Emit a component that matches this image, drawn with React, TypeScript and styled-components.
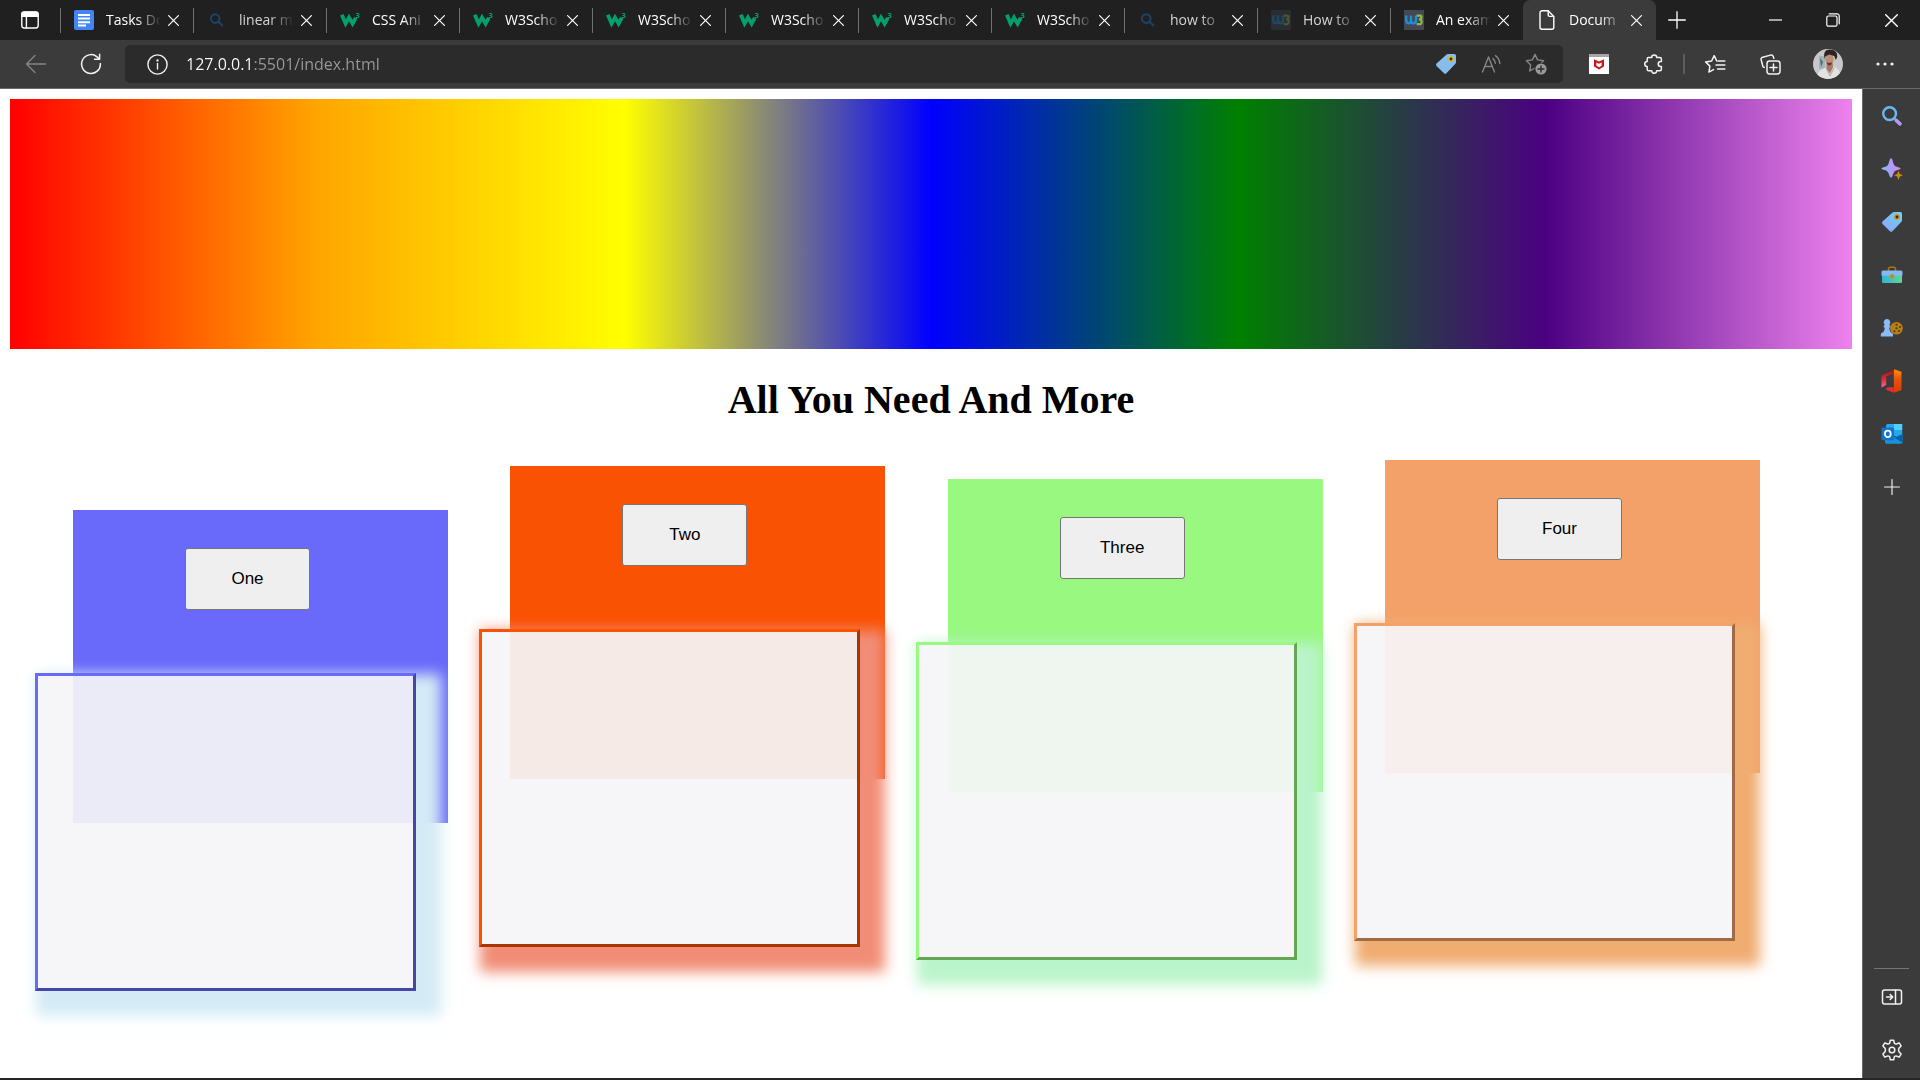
import React from "react";
import styled, { createGlobalStyle } from "styled-components";

const GlobalStyle = createGlobalStyle`
  * { box-sizing: border-box; }
  body { margin: 0; background: #fff; }
  button { font: inherit; }
`;

const uiFont = `"Segoe UI", "Open Sans", "Noto Sans", sans-serif`;

const Window = styled.div`
  display: flex;
  flex-direction: column;
  min-height: 100vh;
  background: #3b3b3b;
  border-bottom: 2px solid #262626;
  font-family: ${uiFont};
`;

/* ---------- tab strip ---------- */

const TabStrip = styled.div`
  display: flex;
  height: 40px;
  background: #202020;
  color: #fff;
`;

const StripButton = styled.button<{ $width: number }>`
  display: flex;
  flex: none;
  align-items: center;
  justify-content: center;
  width: ${(p) => p.$width}px;
  height: 40px;
  padding: 0;
  border: 0;
  background: none;
  color: #fff;
`;

const TabList = styled.div`
  display: flex;
  min-width: 0;
`;

const Tab = styled.div<{ $active?: boolean }>`
  display: flex;
  align-items: center;
  width: 133px;
  min-width: 0;
  padding: 0 8px 0 0;
  border-radius: 7px 7px 0 0;
  background: ${(p) => (p.$active ? "#3b3b3b" : "transparent")};

  &::before {
    content: "";
    width: 1px;
    height: 25px;
    margin-right: 13px;
    background: ${(p) => (p.$active ? "transparent" : "#6f6f6f")};
  }
`;

const TabTitle = styled.span<{ $dim?: boolean }>`
  flex: 1;
  min-width: 0;
  margin-left: 12px;
  overflow: hidden;
  white-space: nowrap;
  font-size: 14px;
  line-height: 20px;
  color: ${(p) => (p.$dim ? "#d4d4d4" : "#fff")};
  mask-image: linear-gradient(to right, #000 55%, transparent 100%);
`;

const CloseButton = styled.button`
  display: flex;
  align-items: center;
  justify-content: center;
  width: 24px;
  height: 24px;
  padding: 0;
  border: 0;
  background: none;
  color: #fff;
`;

const WindowControls = styled.div`
  display: flex;
  margin-left: auto;
`;

/* ---------- toolbar ---------- */

const Toolbar = styled.div`
  display: flex;
  align-items: center;
  height: 49px;
  padding: 0 7px 0 8px;
  border-bottom: 1px solid #6a6a6a;
`;

const ToolButton = styled.button<{ $muted?: boolean; $wide?: boolean }>`
  display: flex;
  flex: none;
  align-items: center;
  justify-content: center;
  width: ${(p) => (p.$wide ? 57 : 55)}px;
  height: 38px;
  padding: 0;
  border: 0;
  background: none;
  color: ${(p) => (p.$muted ? "#858585" : "#f2f2f2")};
`;

const AddressBar = styled.div`
  display: flex;
  flex: 1;
  align-items: center;
  min-width: 0;
  height: 38px;
  margin: 0 8px 0 7px;
  padding: 0 5px 0 22px;
  border-radius: 5px;
  background: #2b2b2b;
  color: #f2f2f2;
`;

const InfoButton = styled.button`
  display: flex;
  padding: 0;
  border: 0;
  background: none;
  color: inherit;
`;

const AddressInput = styled.input`
  flex: 1;
  min-width: 0;
  height: 34px;
  margin-left: 18px;
  padding: 0;
  border: 0;
  outline: 0;
  font-family: ${uiFont};
  font-size: 16px;
  color: #9a9a9a;
  background: linear-gradient(to right, #fff 68px, #9a9a9a 68px);
  background-clip: text;
  -webkit-text-fill-color: transparent;
`;

const AddressActions = styled.div`
  display: flex;
  & > button { width: 45px; }
`;

const Divider = styled.span`
  width: 2px;
  height: 20px;
  margin: 0 2px;
  background: #5c5c5c;
`;

/* ---------- sidebar ---------- */

const Workspace = styled.div`
  display: flex;
  flex: 1;
`;

const Sidebar = styled.nav`
  display: flex;
  flex: none;
  flex-direction: column;
  align-items: center;
  width: 58px;
  border-left: 1px solid #6a6a6a;
`;

const SideButton = styled.button`
  display: flex;
  align-items: center;
  justify-content: center;
  width: 57px;
  height: 53px;
  padding: 0;
  border: 0;
  background: none;
  color: #f2f2f2;
`;

const SideFooter = styled.div`
  display: flex;
  flex-direction: column;
  align-items: center;
  margin-top: auto;
  padding-bottom: 2px;

  &::before {
    content: "";
    width: 35px;
    height: 1px;
    margin-bottom: 1px;
    background: #757575;
  }
`;

/* ---------- page ---------- */

const Page = styled.main`
  flex: 1;
  min-width: 0;
  padding: 10px;
  background: #fff;
`;

const Rainbow = styled.div`
  height: 250px;
  background: linear-gradient(to right, red, orange, yellow, blue, green, indigo, violet);
`;

const Heading = styled.h1`
  margin: 28px 0 26px;
  font-family: "Times New Roman", "Liberation Serif", serif;
  font-size: 40px;
  line-height: 46px;
  text-align: center;
  color: #000;
`;

const CardRow = styled.section`
  display: flex;
  justify-content: space-between;
  padding: 0 92px 0 63px;
`;

const Card = styled.article<{ $color: string; $drop: number }>`
  position: relative;
  width: 375px;
  height: 313px;
  margin-top: ${(p) => p.$drop}px;
  padding: 38px 0 0 112px;
  background: ${(p) => p.$color};
`;

const CardButton = styled.button`
  width: 125px;
  height: 62px;
  padding: 0 0 1px;
  border: 1px solid #767676;
  border-radius: 3px;
  background: #efefef;
  font-family: Arial, "Liberation Sans", sans-serif;
  font-size: 17px;
  color: #000;
`;

const Panel = styled.div<{ $color: string; $edge: string; $glow: string; $slide: number }>`
  position: absolute;
  top: 163px;
  left: ${(p) => p.$slide}px;
  width: 381px;
  height: 318px;
  border: 3px solid;
  border-color: ${(p) => `${p.$color} ${p.$edge} ${p.$edge} ${p.$color}`};
  background: rgba(245, 245, 248, 0.93);
  background-clip: padding-box;
  box-shadow: 13px 13px 13px 12px ${(p) => p.$glow};
`;

/* ---------- icons ---------- */

const line = { fill: "none", stroke: "currentColor", strokeWidth: 1.4, strokeLinecap: "round", strokeLinejoin: "round" } as const;

const DocsIcon = () => (
  <svg width="20" height="20" viewBox="0 0 20 20">
    <rect width="20" height="20" rx="2" fill="#4285f4" />
    <path d="M4 5h12M4 8.6h12M4 12.2h12M4 15.6h8" stroke="#fff" strokeWidth="2" />
  </svg>
);
const BlueSearchIcon = () => (
  <svg width="20" height="20" viewBox="0 0 20 20" fill="none" stroke="#1b4468" strokeWidth="2">
    <circle cx="8.2" cy="8.6" r="4.3" />
    <path d="M11.4 11.8l4.6 4.2" />
  </svg>
);
const SchoolsIcon = () => (
  <svg width="20" height="20" viewBox="0 0 20 20">
    <path d="M1.800 4.800L5.600 13.600 9 7.600l3.600 6 3.200-5.800" fill="none" stroke="#04a06c" strokeWidth="3.800" />
    <text x="15.6" y="8.4" fontSize="7.5" fontWeight="700" fill="#04a06c" fontFamily="Open Sans, sans-serif">3</text>
  </svg>
);
const ResourceIcon = ({ dim }: { dim?: boolean }) => (
  <svg width="20" height="20" viewBox="0 0 20 20">
    <rect width="20" height="20" fill={dim ? "#2c2d32" : "#454854"} />
    <path d="M2.2 5.6V10q0 3.3 2.4 3.3T7 10V5.6M7 10q0 3.3 2.5 3.3T12 10V5.6" fill="none" stroke={dim ? "#1c4a62" : "#1d8fd0"} strokeWidth="2.4" />
    <path d="M12.6 5.6h3.6q1.6.3 1.3 2t-2.6 1.7q3 0 2.8 2.6t-3 2.3h-2" fill="none" stroke={dim ? "#46592f" : "#8cba3c"} strokeWidth="2.2" />
  </svg>
);
const FileIcon = () => (
  <svg width="20" height="20" viewBox="0 0 20 20" {...line}>
    <path d="M5 .8h6.2l5.6 5.6v10.8a2 2 0 0 1-2 2H5a2 2 0 0 1-2-2V2.8a2 2 0 0 1 2-2z" />
    <path d="M11.2 1v4a1.4 1.4 0 0 0 1.4 1.4h4" />
  </svg>
);
const CloseIcon = ({ size = 11 }: { size?: number }) => (
  <svg width={size} height={size} viewBox="0 0 11 11" {...line} strokeWidth={1.2}>
    <path d="M.6.6l9.8 9.8M10.4.6L.6 10.4" />
  </svg>
);
const PlusIcon = ({ size }: { size: number }) => (
  <svg width={size} height={size} viewBox="0 0 18 18" {...line} strokeWidth={1.3}>
    <path d="M9 .7v16.6M.7 9h16.6" />
  </svg>
);
const TabMenuIcon = () => (
  <svg width="20" height="20" viewBox="0 0 20 20" {...line}>
    <rect x="1.8" y="2" width="16.4" height="16" rx="2.4" />
    <path d="M2 4.2q0-2 2-2h12q2 0 2 2V6.400H2z" fill="currentColor" />
    <path d="M6.400 6.500V18" />
  </svg>
);
const RestoreIcon = () => (
  <svg width="14" height="14" viewBox="0 0 14 14" {...line} strokeWidth={1.2}>
    <rect x=".8" y="3" width="10.200" height="10.200" rx="1.500" />
    <path d="M3.200.8h7.800a2.200 2.200 0 0 1 2.200 2.200v7.800" />
  </svg>
);
const BackIcon = () => (
  <svg width="22" height="20" viewBox="0 0 22 20" {...line}>
    <path d="M20.500 10H1.500M10 1.500L1.500 10l8.500 8.500" />
  </svg>
);
const ReloadIcon = () => (
  <svg width="22" height="22" viewBox="0 0 22 22" {...line} strokeWidth={1.5}>
    <path d="M20.400 10.500a9.400 9.400 0 1 1-3.400-6.700l2.200 2.100M19.600 1.200v5h-5" />
  </svg>
);
const InfoIcon = () => (
  <svg width="21" height="21" viewBox="0 0 21 21" {...line}>
    <circle cx="10.500" cy="10.500" r="9.600" />
    <path d="M10.500 9.500v5.500" />
    <circle cx="10.500" cy="6.400" r=".5" fill="currentColor" />
  </svg>
);
const TagIcon = ({ side }: { side?: boolean }) => (
  <svg width="22" height="22" viewBox="0 0 22 22">
    <defs>
      <linearGradient id="tagFill" x1="1" y1="0" x2="0.300" y2="1">
        <stop offset="0" stopColor="#6fd3f3" />
        <stop offset="1" stopColor="#8aa8ff" />
      </linearGradient>
    </defs>
    <path d="M11.600 1.600q.6-.6 1.500-.6h6.100q1.800 0 1.800 1.800v6.400q0 .9-.6 1.500l-9 9.600q-1.200 1-2.400 0L1.500 12.900q-1-1.200 0-2.300z" fill={side ? "url(#tagFill)" : "#86bdec"} />
    <circle cx="16" cy="6" r="2.800" fill={side ? "#e08a00" : "#efb400"} />
    <circle cx="16" cy="6" r="1.400" fill="#3a2c10" />
  </svg>
);
const ReadAloudIcon = () => (
  <svg width="20" height="20" viewBox="0 0 20 20" {...line}>
    <path d="M1.500 18L7.500 3l6 15M3.600 12.500h7.800M12 4.600q2 1.600 2.300 4.600M14.500 1.600q4 3 4.300 8" />
  </svg>
);
const starPath = "M10 1.400l2.600 5.500 6 .8-4.400 4.200 1 6L10 15l-5.300 2.900 1-6L1.400 7.700l6-.8z";
const AddFavoriteIcon = () => (
  <svg width="22" height="22" viewBox="0 0 22 22" {...line}>
    <path d={starPath} />
    <circle cx="16" cy="16" r="6.400" fill="#2b2b2b" stroke="none" />
    <circle cx="16" cy="16" r="5.600" fill="#9a9a9a" stroke="none" />
    <path d="M16 13v6M13 16h6" stroke="#2b2b2b" />
  </svg>
);
const ShieldIcon = () => (
  <svg width="20" height="20" viewBox="0 0 20 20">
    <rect width="20" height="20" fill="#fff" />
    <rect width="20" height="3" fill="#aaa4a2" />
    <path d="M5 5.200l5 2.400 5-2.400v7.400l-5 3-5-3zM7.400 8.500v3.200l2.600 1.500 2.600-1.500V8.500L10 9.800z" fill="#c8171e" fillRule="evenodd" />
  </svg>
);
const PuzzleIcon = () => (
  <svg width="20" height="20" viewBox="0 0 20 20" {...line} strokeWidth={1.500}>
    <path d="M4.500 3.400h3.200a2.500 2.500 0 0 1 5 0h3.200q1.500 0 1.500 1.500v2.600h-.7a2.500 2.500 0 0 0 0 5h.7v2.800q0 1.500-1.500 1.500h-3.200a2.500 2.500 0 0 1-5 0H4.500q-1.300 0-1.300-1.500v-2.800a2.500 2.500 0 0 1 0-5V4.900q0-1.500 1.300-1.500z" />
  </svg>
);
const FavoritesIcon = () => (
  <svg width="22" height="20" viewBox="0 0 22 20" {...line} strokeWidth={1.500}>
    <path d="M12.800 7l-2.600-5.300L7.600 7l-6 .9 4.300 4.200-1 6 4.600-2.500M14.200 7h6.600M12 11h8.800M13.500 15h7.300" />
  </svg>
);
const CollectionsIcon = () => (
  <svg width="21" height="21" viewBox="0 0 21 21" {...line} strokeWidth={1.500}>
    <path d="M4.300 13.400L3 12.700 1.200 6q-.6-2.200 1.400-2.700l8-2.200q2-.5 2.700 1.500l.5 1.800" />
    <rect x="7" y="6.900" width="13" height="13" rx="2.600" />
    <path d="M13.500 9.900v7M10 13.400h7" />
  </svg>
);
const Avatar = () => (
  <svg width="30" height="30" viewBox="0 0 30 30">
    <clipPath id="avatarClip"><circle cx="15" cy="15" r="15" /></clipPath>
    <g clipPath="url(#avatarClip)">
      <rect width="30" height="30" fill="#c6c9c8" />
      <path d="M6 7h6v13H6z" fill="#a3b4b8" />
      <path d="M7 9l3 4-2 5z" fill="#496c80" />
      <path d="M13.500 14h6l1 7-3 4-4-4z" fill="#a87a62" />
      <ellipse cx="16.500" cy="10.500" rx="4.200" ry="6" fill="#bd8e76" />
      <path d="M11.600 10Q9.500 1 16 .5t8 4.500q1.200 3-1.200 6l-1.600-4-5-1.600-3.600 1.800z" fill="#2a2422" />
      <path d="M13.800 13.200q2.600 1 5.200 0-.4 3.300-2.600 3.300t-2.600-3.300z" fill="#5b3b31" />
      <path d="M3 30q1.500-9 9.500-11.500l4.500 6 3.500-7q7 2.500 8 12.500z" fill="#e4e3e2" />
      <path d="M13 19l4 8 4-8" fill="none" stroke="#aaa7a6" />
    </g>
  </svg>
);
const MoreIcon = () => (
  <svg width="18" height="4" viewBox="0 0 18 4" fill="currentColor">
    <circle cx="2" cy="2" r="1.600" /><circle cx="9" cy="2" r="1.600" /><circle cx="16" cy="2" r="1.600" />
  </svg>
);

const SideSearchIcon = () => (
  <svg width="22" height="22" viewBox="0 0 22 22" fill="none">
    <circle cx="8.600" cy="8.600" r="6.400" stroke="#6bb8f0" strokeWidth="2.400" />
    <path d="M13 13l2 2" stroke="#6bb8f0" strokeWidth="1.800" />
    <path d="M15.200 15.400l3.800 3.400" stroke="#b995f5" strokeWidth="3.600" strokeLinecap="round" />
  </svg>
);
const SparkleIcon = () => (
  <svg width="22" height="22" viewBox="0 0 22 22">
    <defs>
      <linearGradient id="spark" x1="0" x2="1"><stop offset="0" stopColor="#7fc0f8" /><stop offset=".5" stopColor="#ae9cf7" /><stop offset="1" stopColor="#d58ce8" /></linearGradient>
    </defs>
    <path d="M10 .3q1 0 1.400 1.500 1.200 5.500 3 6.500l4.400 1.400q1.600.8 0 1.600l-4.400 1.500q-1.800 1-3 5.500Q11 19.600 10 19.600t-1.300-1.300q-1.300-4.500-3-5.500l-4.500-1.500q-1.500-.8 0-1.600l4.500-1.400q1.700-1 3-6.500Q9 .3 10 .3z" fill="url(#spark)" />
    <path d="M17.500 12.700l1.300 3.300 3.200 1.300-3.200 1.300-1.300 3.300-1.300-3.300-3.200-1.300 3.200-1.300z" fill="#c98d10" />
  </svg>
);
const ToolboxIcon = () => (
  <svg width="22" height="18" viewBox="0 0 22 18">
    <defs><linearGradient id="box" x1="0" x2="1"><stop offset="0" stopColor="#2fb6d8" /><stop offset="1" stopColor="#65d391" /></linearGradient></defs>
    <path d="M7.500 5V3q0-1.800 1.800-1.800h3.400q1.800 0 1.800 1.800v2" fill="none" stroke="#a87410" strokeWidth="1.600" />
    <path d="M1 8h20v7.500q0 1.500-1.500 1.500h-17Q1 17 1 15.500z" fill="url(#box)" />
    <path d="M.5 6q0-1.500 1.500-1.500h18q1.500 0 1.500 1.500v3.500H.5z" fill="#83b9f7" />
    <rect x="9.300" y="8.200" width="3.600" height="4" rx="1" fill="#c58a12" />
  </svg>
);
const GamesIcon = () => (
  <svg width="24" height="20" viewBox="0 0 24 20">
    <circle cx="16.500" cy="10.300" r="6.300" fill="#b87f12" />
    <g fill="#4a3818"><circle cx="16.500" cy="6.700" r="1" /><circle cx="20" cy="9" r="1" /><circle cx="19" cy="13" r="1" /><circle cx="14.500" cy="13.300" r="1" /><circle cx="16.500" cy="10.200" r="1" /></g>
    <path d="M7 1a3.500 3.500 0 0 1 2.300 6l1 1v1.400H9.200q.2 3.500 1.500 4.900 2.300.5 2.300 2.200v2H.800v-2q0-1.700 2.400-2.200 1.500-1.400 1.600-4.900H3.700V8l1-1A3.500 3.500 0 0 1 7 1z" fill="#8cbcf7" />
  </svg>
);
const OfficeIcon = () => (
  <svg width="21" height="24" viewBox="0 0 21 24">
    <defs>
      <linearGradient id="officeR" x1="0" y1="0" x2="0" y2="1"><stop offset="0" stopColor="#f59a05" /><stop offset=".4" stopColor="#e85410" /><stop offset="1" stopColor="#d83b01" /></linearGradient>
      <linearGradient id="officeL" x1="0" y1="0" x2="0" y2="1"><stop offset="0" stopColor="#9c1022" /><stop offset=".6" stopColor="#e23038" /><stop offset="1" stopColor="#f06bb5" /></linearGradient>
    </defs>
    <path d="M12.800.3l7.700 2.400v18.600l-7.700 2.400z" fill="url(#officeR)" />
    <path d="M12.800.3v4.400L5.200 7.200v8.900L.5 18.500V6.800z" fill="url(#officeL)" />
    <path d="M12.800 23.700L4.500 20.500l2-2.200h6.300z" fill="#e8283c" />
  </svg>
);
const OutlookIcon = () => (
  <svg width="22" height="20" viewBox="0 0 22 20">
    <path d="M5 1.500Q5 0 6.500 0H20q1.200 0 1.200 1.500V12H5z" fill="#28a8ea" />
    <path d="M13 0h8.200v6H13z" fill="#50d0ff" />
    <path d="M4 12l9 1 8.500-3v8q0 1.700-1.500 1.700H5.500Q4 19.700 4 18z" fill="#1793dd" />
    <path d="M21.500 10v8.500L13.500 14z" fill="#0a5ea8" />
    <rect x=".5" y="3.600" width="12.600" height="12.600" rx="1.400" fill="#0f74cf" />
    <ellipse cx="6.800" cy="9.900" rx="2.900" ry="3.200" fill="none" stroke="#fff" strokeWidth="1.800" />
  </svg>
);
const HidePanelIcon = () => (
  <svg width="22" height="16" viewBox="0 0 22 16" {...line} strokeWidth={1.500}>
    <rect x="1.500" y="1" width="19" height="14" rx="2" />
    <path d="M14.500 1v14M5.500 8h6M9.200 5.500L11.700 8l-2.500 2.500" />
  </svg>
);
const GearIcon = () => (
  <svg width="22" height="22" viewBox="0 0 22 22" {...line} strokeWidth={1.500}>
    <circle cx="11" cy="11" r="2.800" />
    <path d="M9.300 1.200h3.400l.5 2.600q.2.800 1.100 1.100t1.700-.1l2.200-.9 1.900 3-1.900 2q-.6.900-.6 2.100t.6 2.100l1.900 2-1.900 3-2.200-.9q-.9-.4-1.700-.1t-1.100 1.100l-.5 2.600H9.300l-.5-2.600q-.2-.8-1.100-1.100T6 17.200l-2.200.9-1.900-3 1.900-2q.6-.9.600-2.100t-.6-2.100l-1.900-2 1.900-3 2.200.9q.9.400 1.700.1t1.100-1.100z" />
  </svg>
);

/* ---------- data ---------- */

const tabs = [
  { title: "Tasks Do", icon: <DocsIcon /> },
  { title: "linear m", icon: <BlueSearchIcon />, dim: true },
  { title: "CSS Ani", icon: <SchoolsIcon /> },
  { title: "W3Scho", icon: <SchoolsIcon /> },
  { title: "W3Scho", icon: <SchoolsIcon /> },
  { title: "W3Scho", icon: <SchoolsIcon /> },
  { title: "W3Scho", icon: <SchoolsIcon /> },
  { title: "W3Scho", icon: <SchoolsIcon /> },
  { title: "how to", icon: <BlueSearchIcon />, dim: true },
  { title: "How to", icon: <ResourceIcon dim />, dim: true },
  { title: "An exam", icon: <ResourceIcon /> },
  { title: "Docum", icon: <FileIcon />, active: true },
];

const sideApps = [
  { name: "Search", icon: <SideSearchIcon /> },
  { name: "Discover", icon: <SparkleIcon /> },
  { name: "Shopping", icon: <TagIcon side /> },
  { name: "Tools", icon: <ToolboxIcon /> },
  { name: "Games", icon: <GamesIcon /> },
  { name: "Office", icon: <OfficeIcon /> },
  { name: "Outlook", icon: <OutlookIcon /> },
  { name: "Customize", icon: <PlusIcon size={16} /> },
];

const cards = [
  { label: "One", color: "#6969fa", edge: "#4646a7", glow: "#d4ebf5", drop: 61, slide: -38 },
  { label: "Two", color: "#fa5203", edge: "#a73702", glow: "#f18d76", drop: 17, slide: -31 },
  { label: "Three", color: "#98f880", edge: "#65a555", glow: "#baf4ca", drop: 30, slide: -32 },
  { label: "Four", color: "#f3a168", edge: "#a26b45", glow: "#f0ad72", drop: 11, slide: -31 },
];

export default function App() {
  return (
    <Window>
      <GlobalStyle />
      <TabStrip>
        <StripButton $width={60} aria-label="Tab actions"><TabMenuIcon /></StripButton>
        <TabList>
          {tabs.map((tab, i) => (
            <Tab key={i} $active={tab.active}>
              {tab.icon}
              <TabTitle $dim={tab.dim}>{tab.title}</TabTitle>
              <CloseButton aria-label="Close tab"><CloseIcon /></CloseButton>
            </Tab>
          ))}
        </TabList>
        <StripButton $width={42} aria-label="New tab"><PlusIcon size={18} /></StripButton>
        <WindowControls>
          <StripButton $width={58} aria-label="Minimize">
            <svg width="13" height="2" viewBox="0 0 13 2"><path d="M0 1h13" stroke="currentColor" strokeWidth="1.200" /></svg>
          </StripButton>
          <StripButton $width={58} aria-label="Restore"><RestoreIcon /></StripButton>
          <StripButton $width={58} aria-label="Close"><CloseIcon size={13} /></StripButton>
        </WindowControls>
      </TabStrip>

      <Toolbar>
        <ToolButton $muted aria-label="Back"><BackIcon /></ToolButton>
        <ToolButton aria-label="Refresh"><ReloadIcon /></ToolButton>
        <AddressBar>
          <InfoButton aria-label="Site information"><InfoIcon /></InfoButton>
          <AddressInput aria-label="Address" type="text" defaultValue="127.0.0.1:5501/index.html" />
          <AddressActions>
            <ToolButton aria-label="Shopping"><TagIcon /></ToolButton>
            <ToolButton $muted aria-label="Read aloud"><ReadAloudIcon /></ToolButton>
            <ToolButton $muted aria-label="Add to favorites"><AddFavoriteIcon /></ToolButton>
          </AddressActions>
        </AddressBar>
        <ToolButton aria-label="Web protection"><ShieldIcon /></ToolButton>
        <ToolButton aria-label="Extensions"><PuzzleIcon /></ToolButton>
        <Divider />
        <ToolButton aria-label="Favorites"><FavoritesIcon /></ToolButton>
        <ToolButton $wide aria-label="Collections"><CollectionsIcon /></ToolButton>
        <ToolButton $wide aria-label="Profile"><Avatar /></ToolButton>
        <ToolButton $wide aria-label="Settings and more"><MoreIcon /></ToolButton>
      </Toolbar>

      <Workspace>
        <Page>
          <Rainbow />
          <Heading>All You Need And More</Heading>
          <CardRow>
            {cards.map((card) => (
              <Card key={card.label} $color={card.color} $drop={card.drop}>
                <CardButton>{card.label}</CardButton>
                <Panel $color={card.color} $edge={card.edge} $glow={card.glow} $slide={card.slide} />
              </Card>
            ))}
          </CardRow>
        </Page>
        <Sidebar aria-label="Sidebar">
          {sideApps.map((app) => (
            <SideButton key={app.name} aria-label={app.name}>{app.icon}</SideButton>
          ))}
          <SideFooter>
            <SideButton aria-label="Hide sidebar"><HidePanelIcon /></SideButton>
            <SideButton aria-label="Settings"><GearIcon /></SideButton>
          </SideFooter>
        </Sidebar>
      </Workspace>
    </Window>
  );
}
